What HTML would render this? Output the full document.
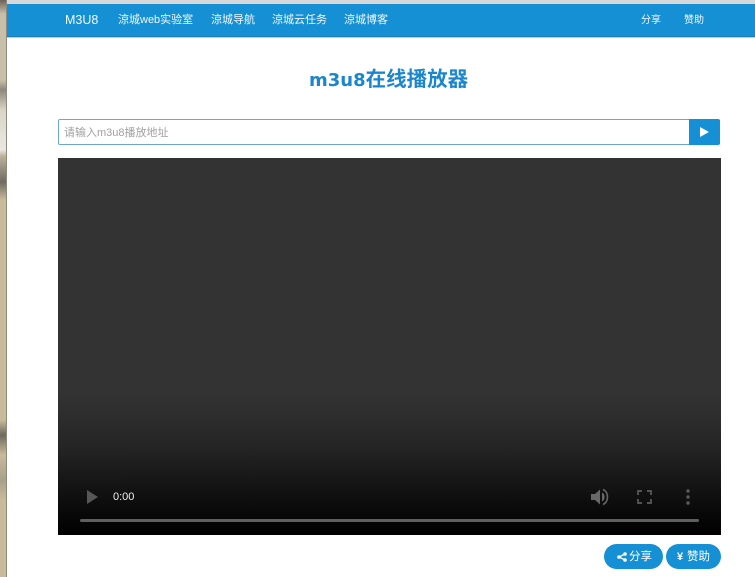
<!DOCTYPE html>
<html lang="zh">
<head>
<meta charset="utf-8">
<title>m3u8在线播放器</title>
<style>
html,body{margin:0;padding:0;width:755px;height:577px;overflow:hidden;background:#fff;font-family:"Liberation Sans","Noto Sans CJK SC",sans-serif;}
#wrap{position:absolute;left:0;top:0;width:755px;height:577px;overflow:hidden;filter:blur(0.35px);}
.a{position:absolute;white-space:nowrap;}
#strip{left:0;top:0;width:6px;height:577px;background:linear-gradient(to bottom,#6a625c 0,#c9bfa8 14px,#c9bfa8 80px,#8d887c 90px,#d8d4c6 110px,#e6e4dc 140px,#e8e6de 150px,#bcb39c 156px,#6f6b60 182px,#c8bb9c 200px,#c8bb9c 420px,#6e695c 435px,#c8bb9c 455px,#a8a08a 480px,#c8bb9c 500px,#c8bb9c 577px);border-right:1px solid #8f8a7c;}
#top{left:7px;top:0;width:748px;height:4px;background:#d8d8d8;}
#nav{left:7px;top:4px;width:748px;height:32px;background:#1690d4;border-bottom:1px solid #1b7fb8;box-shadow:0 1px 0 #a8d4ee;}
.n{color:#f2f8fc;font-size:11px;line-height:16px;top:12px;}
h1{margin:0;left:309px;top:68px;color:#1a86cc;font-size:20.5px;line-height:24px;font-weight:700;}
h1 span{font-family:"DejaVu Sans",sans-serif;font-size:18px;}
#input{left:58px;top:119px;width:631px;height:24px;border:1px solid #6aa8cc;border-right:0;background:#fff;color:#a0a0a0;font-size:11px;line-height:26px;text-indent:5px;border-radius:2px 0 0 2px;}
#go{left:689px;top:119px;width:31px;height:26px;background:#1690d4;border-radius:0 2px 2px 0;}
#video{left:58px;top:158px;width:663px;height:377px;background:linear-gradient(to bottom,#333 0,#333 235px,#262626 285px,#111 335px,#000 377px);}
#bar{left:80px;top:519px;width:619px;height:3px;background:#5f5f5f;border-radius:2px;}
.btn{top:544px;height:25px;background:#1690d4;border-radius:13px;color:#fff;font-size:11.5px;line-height:26px;}
</style>
</head>
<body>
<div id="wrap">
<div class="a" id="strip"></div>
<div class="a" id="top"></div>
<div class="a" id="nav"></div>
<div class="a n" style="left:65px;font-size:12.5px;">M3U8</div>
<div class="a n" style="left:118px;">涼城web实验室</div>
<div class="a n" style="left:211px;">涼城导航</div>
<div class="a n" style="left:272px;">涼城云任务</div>
<div class="a n" style="left:344px;">涼城博客</div>
<div class="a n" style="left:641px;font-size:10px;top:13px;">分享</div>
<div class="a n" style="left:684px;font-size:10px;top:13px;">赞助</div>

<h1 class="a"><span>m3u8</span>在线播放器</h1>

<div class="a" id="input">请输入m3u8播放地址</div>
<div class="a" id="go"><svg width="31" height="26" style="display:block"><path d="M11 8 L20 13 L11 18 Z" fill="#fff"/></svg></div>

<div class="a" id="video"></div>
<svg class="a" style="left:85px;top:488px;" width="16" height="18"><path d="M2 2 L13 9 L2 16 Z" fill="#575757"/></svg>
<div class="a" style="left:113px;top:490px;color:#f0f0f0;font-size:11px;line-height:15px;">0:00</div>
<svg class="a" style="left:590px;top:487px;" width="20" height="20"><path d="M1 7 H5 L10 2.5 V17.5 L5 13 H1 Z" fill="#686868"/><path d="M12 5.5 C15.5 7 15.5 13 12 14.5 Z" fill="#686868"/><path d="M13 2.5 C19 5 19 15 13 17.5" fill="none" stroke="#686868" stroke-width="1.6"/></svg>
<svg class="a" style="left:637px;top:490px;" width="15" height="14"><path d="M1 5 V1 H5 M10 1 H14 V5 M14 9 V13 H10 M5 13 H1 V9" fill="none" stroke="#5c5c5c" stroke-width="1.7"/></svg>
<svg class="a" style="left:685px;top:488px;" width="6" height="18"><circle cx="3" cy="3" r="1.7" fill="#5c5c5c"/><circle cx="3" cy="9" r="1.7" fill="#5c5c5c"/><circle cx="3" cy="15" r="1.7" fill="#5c5c5c"/></svg>
<div class="a" id="bar"></div>

<div class="a btn" style="left:604px;width:59px;"><svg class="a" style="left:13px;top:8px;" width="10" height="10"><path d="M8 2 L2 5 L8 8" fill="none" stroke="#fff" stroke-width="1.3"/><circle cx="8" cy="2" r="1.8" fill="#fff"/><circle cx="2" cy="5" r="1.8" fill="#fff"/><circle cx="8" cy="8" r="1.8" fill="#fff"/></svg><span class="a" style="left:25px;">分享</span></div>
<div class="a btn" style="left:666px;width:55px;"><span class="a" style="left:11px;font-weight:700;font-size:11px;">¥</span><span class="a" style="left:21px;">赞助</span></div>
</div>
</body>
</html>
